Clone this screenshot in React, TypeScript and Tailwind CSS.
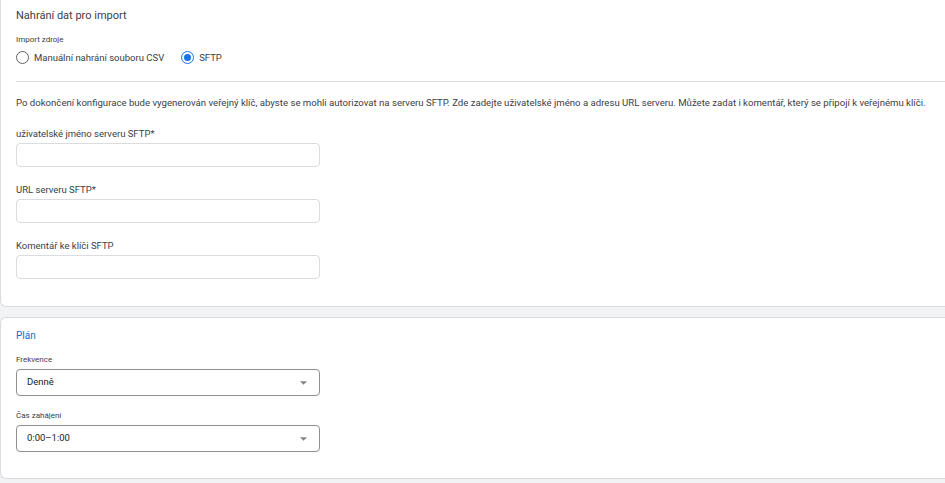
import React from 'react';

function Radio({ label, checked }: { label: string; checked?: boolean }) {
  return (
    <label className="flex items-center gap-[5px] cursor-pointer">
      <span
        className={`w-[13px] h-[13px] rounded-full border-[1.5px] flex items-center justify-center ${
          checked ? 'border-[#1a73e8]' : 'border-[#5f6368]'
        }`}
      >
        {checked && <span className="w-[7px] h-[7px] rounded-full bg-[#1a73e8]" />}
      </span>
      <span className="text-[9.5px] text-[#3c4043] leading-[13px]">{label}</span>
    </label>
  );
}

function TextField({ label }: { label: string }) {
  return (
    <div className="flex flex-col">
      <div className="text-[9.5px] text-[#3c4043] leading-[14px] mb-[2px]">{label}</div>
      <div className="w-[304px] h-[24px] rounded-[4px] border border-[#dadce0] bg-white" />
    </div>
  );
}

function SelectField({ label, value }: { label: string; value: string }) {
  return (
    <div className="flex flex-col">
      <div className="text-[8px] text-[#3c4043] leading-[10px] mb-[4px]">{label}</div>
      <div className="w-[304px] h-[27px] rounded-[4px] border border-[#8d9196] bg-white flex items-center justify-between pl-[10px] pr-[10px]">
        <span className="text-[9.5px] text-[#202124]">{value}</span>
        <svg width="7" height="4" viewBox="0 0 8 4" className="mr-[2px]">
          <path d="M0 0 L4 4 L8 0 Z" fill="#80868b" />
        </svg>
      </div>
    </div>
  );
}

export default function App() {
  return (
    <div
      className="w-full h-[483px] overflow-hidden bg-[#f1f3f4]"
      style={{ fontFamily: 'Roboto, "Noto Sans", sans-serif' }}
    >
      <div className="w-[960px]">
        {/* Import source card */}
        <section className="bg-white border-b border-l border-[#dadce0] rounded-bl-[6px] h-[307px] pl-[15px] pt-[7px]">
          <h2 className="text-[11px] text-[#3c4043] leading-[17px]">Nahrání dat pro import</h2>
          <div className="text-[8px] text-[#3c4043] leading-[12px] mt-[10px]">Import zdroje</div>
          <div className="flex items-center gap-[17px] mt-[5px]">
            <Radio label="Manuální nahrání souboru CSV" />
            <Radio label="SFTP" checked />
          </div>
          <div className="h-px bg-[#dadce0] mt-[17px]" />
          <p className="text-[9.6px] text-[#3c4043] leading-[14px] mt-[14px]">
            Po dokončení konfigurace bude vygenerován veřejný klíč, abyste se mohli autorizovat na serveru SFTP. Zde zadejte uživatelské jméno a adresu URL serveru. Můžete zadat i komentář, který se připojí k veřejnému klíči.
          </p>
          <div className="flex flex-col gap-[16px] mt-[17px]">
            <TextField label="uživatelské jméno serveru SFTP*" />
            <TextField label="URL serveru SFTP*" />
            <TextField label="Komentář ke klíči SFTP" />
          </div>
        </section>

        {/* Schedule card */}
        <section className="bg-white border border-r-0 border-[#dadce0] rounded-l-[6px] h-[162px] mt-[10px] pl-[15px] pt-[11px]">
          <h2 className="text-[10px] text-[#1967d2] leading-[14px]">Plán</h2>
          <div className="flex flex-col gap-[15px] mt-[12px]">
            <SelectField label="Frekvence" value="Denně" />
            <SelectField label="Čas zahájení" value="0:00–1:00" />
          </div>
        </section>
      </div>
    </div>
  );
}
